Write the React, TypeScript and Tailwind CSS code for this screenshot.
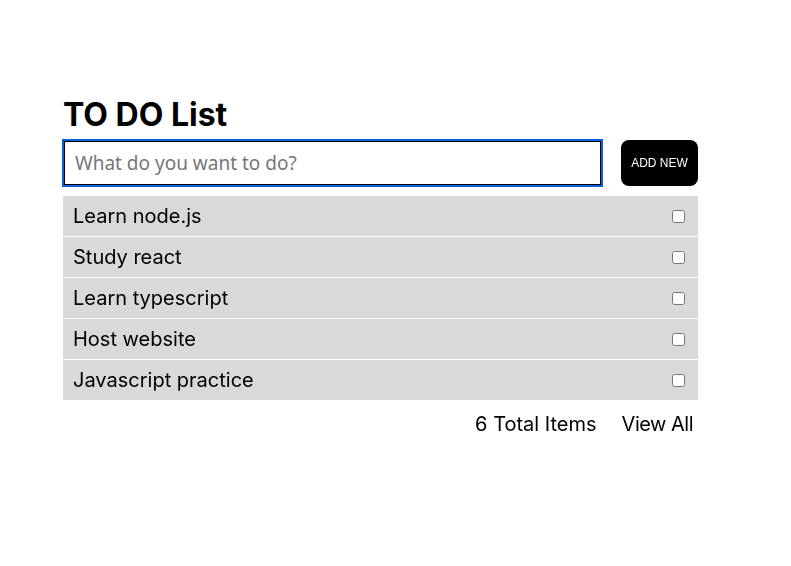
import { useState } from "react";

const todos = ["Learn node.js", "Study react", "Learn typescript", "Host website", "Javascript practice"];

export default function App() {
	const [text, setText] = useState("");

	return (
		<div className="min-h-screen bg-white font-['Inter',sans-serif] text-black">
			<div className="ml-[63px] w-[635px] pt-[96px]">
				<h1 className="text-[32px] leading-[38px] font-bold">TO DO List</h1>
				<div className="mt-[6px] flex items-center justify-between">
					<input
						autoFocus
						value={text}
						onChange={(e) => setText(e.target.value)}
						placeholder="What do you want to do?"
						className="ml-px h-[44px] w-[537px] border border-black px-[10px] font-['Noto_Sans',sans-serif] text-[19px] text-black outline-2 outline-offset-0 outline-[#0b5fdb] placeholder:text-[#767676]"
					/>
					<button className="h-[46px] w-[77px] rounded-[8px] bg-black font-['Liberation_Sans',Arial,sans-serif] text-[12px] text-white">
						ADD NEW
					</button>
				</div>
				<ul className="mt-[10px] flex flex-col gap-px">
					{todos.map((t) => (
						<li key={t} className="flex h-[40px] items-center justify-between bg-[#d9d9d9] pr-[13px] pl-[10px] text-[20px]">
							<span>{t}</span>
							<input type="checkbox" className="h-[13px] w-[13px]" />
						</li>
					))}
				</ul>
				<div className="mt-[12px] flex justify-end gap-[25px] pr-[5px] text-[20px] leading-[24px]">
					<span>6 Total Items</span>
					<span className="tracking-[-0.5px]">View All</span>
				</div>
			</div>
		</div>
	);
}
